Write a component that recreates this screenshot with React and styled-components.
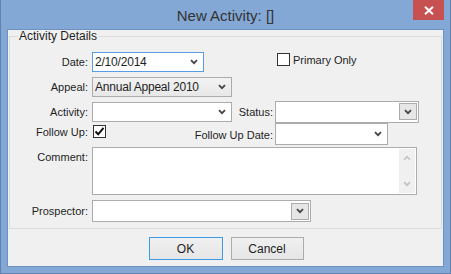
import React from 'react'
import styled, { createGlobalStyle } from 'styled-components'

const GlobalStyle = createGlobalStyle`
  html, body {
    margin: 0;
    padding: 0;
    background: #83a8d5;
  }
  body {
    font-family: "Liberation Sans", Arial, sans-serif;
    font-size: 11px;
    color: #1e1e1e;
  }
`

const Window = styled.div`
  box-sizing: border-box;
  width: 451px;
  height: 274px;
  background: #83a8d5;
  border: 1px solid #5f82b0;
  border-top: none;
  display: flex;
  flex-direction: column;
`

const TitleBar = styled.div`
  height: 28px;
  display: grid;
  grid-template-columns: 1fr auto 1fr;
  align-items: start;
  padding: 0 6px 0 0;
  margin-bottom: 1px;
`

const Title = styled.div`
  grid-column: 2;
  font-size: 15px;
  line-height: 15px;
  color: #333;
  padding-top: 8px;
  padding-left: 6px;
`

const CloseButton = styled.div`
  grid-column: 3;
  justify-self: end;
  width: 31px;
  height: 20px;
  background: #c75050;
  display: flex;
  align-items: center;
  justify-content: center;
`

const Client = styled.div`
  flex: 1;
  margin: 0 6px 6px 6px;
  border: 1px solid #6d91c0;
  background: #f0f0f0;
  display: flex;
  flex-direction: column;
`

const Group = styled.fieldset`
  margin: 0 1px;
  padding: 0 0 6px 0;
  border: 1px solid #dcdcdc;
  min-width: 0;
`

const Legend = styled.legend`
  font-size: 12px;
  line-height: 12px;
  margin-left: 8px;
  padding: 0 2px 0 1px;
  color: #1e1e1e;
`

const Row = styled.div`
  display: grid;
  grid-template-columns: 82px 139px 44px 143px;
  grid-template-rows: ${p => p.$h}px;
  height: ${p => p.$h}px;
  margin-top: ${p => p.$mt}px;
  align-items: center;
`

const Label = styled.div`
  grid-row: 1;
  grid-column: ${p => p.$col || '1'};
  justify-self: end;
  padding-right: ${p => (p.$pad == null ? 4 : p.$pad)}px;
  white-space: nowrap;
  align-self: ${p => p.$top ? 'start' : 'center'};
  margin-top: ${p => p.$mt || 0}px;
`

const Combo = styled.div`
  grid-row: 1;
  grid-column: ${p => p.$col || '2'};
  box-sizing: border-box;
  width: ${p => p.$w}px;
  height: ${p => p.$h || 20}px;
  border: 1px solid ${p => p.$focus ? '#569de5' : '#acacac'};
  background: ${p => p.$list ? 'linear-gradient(#f2f2f2, #e8e8e8)' : '#fff'};
  display: flex;
  align-items: center;
  padding-left: 2px;
  padding-right: ${p => p.$boxed ? 1 : 4}px;
`

const ComboText = styled.span`
  flex: 1;
  white-space: nowrap;
  overflow: hidden;
  font-size: 12px;
  letter-spacing: -0.2px;
`

const DropButton = styled.div`
  box-sizing: border-box;
  width: ${p => p.$boxed ? 18 : 10}px;
  height: ${p => p.$boxed ? 17 : 12}px;
  border: ${p => p.$boxed ? '1px solid #acacac' : 'none'};
  background: ${p => p.$boxed ? '#e6e6e6' : 'transparent'};
  display: flex;
  align-items: center;
  justify-content: center;
`

const Check = styled.div`
  box-sizing: border-box;
  width: 13px;
  height: 13px;
  border: 1px solid #333;
  background: #fff;
  display: flex;
  align-items: center;
  justify-content: center;
`

const CheckWrap = styled.label`
  grid-row: 1;
  grid-column: ${p => p.$col || '2'};
  align-self: start;
  margin-top: ${p => p.$mt || 0}px;
  margin-left: ${p => p.$ml || 0}px;
  display: flex;
  align-items: center;
  gap: 3px;
  white-space: nowrap;
`

const Memo = styled.div`
  grid-row: 1;
  grid-column: 2 / 5;
  box-sizing: border-box;
  width: 325px;
  height: 48px;
  border: 1px solid #acacac;
  background: #fff;
  display: flex;
  justify-content: flex-end;
  padding: 1px;
`

const ScrollBar = styled.div`
  width: 16px;
  background: #f0f0f0;
  display: flex;
  flex-direction: column;
  justify-content: space-between;
  align-items: center;
  padding: 6px 0;
`

const Buttons = styled.div`
  display: flex;
  justify-content: center;
  gap: 8px;
  margin-top: 8px;
  padding-left: 1px;
`

const Button = styled.div`
  box-sizing: border-box;
  width: ${p => p.$w}px;
  height: 23px;
  border: 1px solid ${p => p.$primary ? '#3c9ae6' : '#acacac'};
  background: linear-gradient(#f0f0f0, #e5e5e5);
  display: flex;
  align-items: center;
  justify-content: center;
  font-size: 12px;
  color: #1e1e1e;
`

const Chevron = ({ color = '#444' }) => (
  <svg width="8" height="6" viewBox="0 0 8 6">
    <path d="M1 1.2 L4 4.2 L7 1.2" fill="none" stroke={color} strokeWidth="1.8" />
  </svg>
)

const ChevronUp = ({ color = '#c2c2c2' }) => (
  <svg width="8" height="6" viewBox="0 0 8 6">
    <path d="M1 4.8 L4 1.8 L7 4.8" fill="none" stroke={color} strokeWidth="1.6" />
  </svg>
)

const Tick = () => (
  <svg width="11" height="11" viewBox="0 0 11 11">
    <path d="M1.5 5.5 L4.2 8.3 L9.5 1.8" fill="none" stroke="#111" strokeWidth="2" />
  </svg>
)

const Dropdown = ({ text, boxed, ...rest }) => (
  <Combo $boxed={boxed} {...rest}>
    <ComboText>{text}</ComboText>
    <DropButton $boxed={boxed}>
      <Chevron />
    </DropButton>
  </Combo>
)

const App = () => {
  return (
    <>
      <GlobalStyle />
      <Window>
        <TitleBar>
          <Title>New Activity: []</Title>
          <CloseButton>
            <svg width="10" height="9" viewBox="0 0 10 9">
              <path d="M1 0.8 L9 8.2 M9 0.8 L1 8.2" stroke="#fff" strokeWidth="2" />
            </svg>
          </CloseButton>
        </TitleBar>
        <Client>
          <Group>
            <Legend>Activity Details</Legend>

            <Row $h={20} $mt={10}>
              <Label>Date:</Label>
              <Dropdown text="2/10/2014" $w={112} $focus />
              <CheckWrap $col="4" $ml={2} $mt={1}>
                <Check />
                Primary Only
              </CheckWrap>
            </Row>

            <Row $h={20} $mt={5}>
              <Label>Appeal:</Label>
              <Dropdown text="Annual Appeal 2010" $w={140} $list />
            </Row>

            <Row $h={21} $mt={4}>
              <Label>Activity:</Label>
              <Dropdown text="" $w={140} $h={20} />
              <Label $col="3" $pad={2}>Status:</Label>
              <Dropdown text="" $col="4" $w={144} $h={22} boxed />
            </Row>

            <Row $h={22} $mt={1}>
              <Label $top $mt={3}>Follow Up:</Label>
              <CheckWrap $mt={2} $ml={1}>
                <Check><Tick /></Check>
              </CheckWrap>
              <Label $col="2 / 4" $pad={2} $mt={1}>Follow Up Date:</Label>
              <Dropdown text="" $col="4" $w={113} $h={22} />
            </Row>

            <Row $h={48} $mt={2}>
              <Label $top $mt={4}>Comment:</Label>
              <Memo>
                <ScrollBar>
                  <ChevronUp />
                  <Chevron color="#c2c2c2" />
                </ScrollBar>
              </Memo>
            </Row>

            <Row $h={22} $mt={5}>
              <Label>Prospector:</Label>
              <Dropdown text="" $col="2 / 5" $w={219} $h={22} boxed />
            </Row>
          </Group>

          <Buttons>
            <Button $w={74} $primary>OK</Button>
            <Button $w={73}>Cancel</Button>
          </Buttons>
        </Client>
      </Window>
    </>
  )
}

export default App
